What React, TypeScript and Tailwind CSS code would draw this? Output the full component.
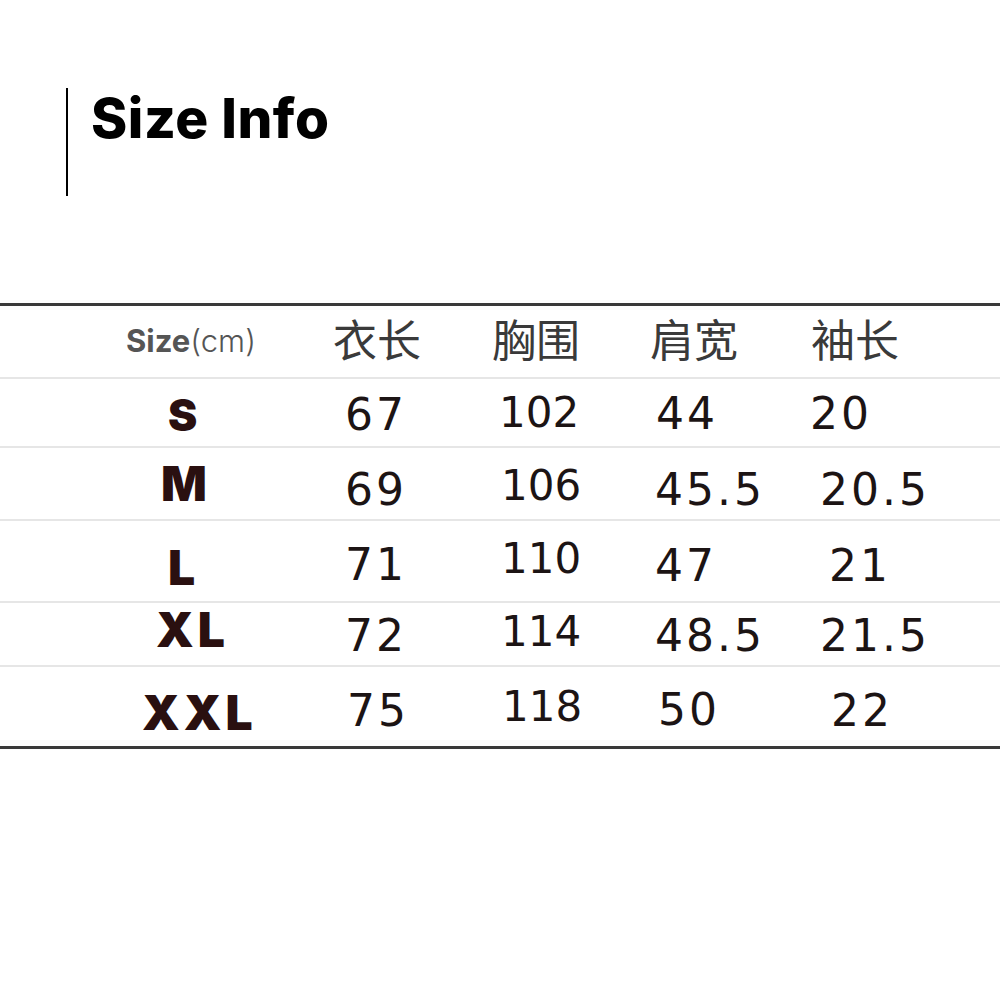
import React from "react";

type Cell = { t: string; c: string };
type Row = { h: string; border: string; size: Cell; cells: Cell[] };

const COLW = ["w-[300px]", "w-[170px]", "w-[160px]", "w-[160px]", "w-[210px]"];

const num1 = "font-['DejaVu_Sans'] text-[44px] leading-none tracking-[3px] text-[#1c1414]";
const num2 = "font-['DejaVu_Sans'] text-[42px] leading-none text-[#1c1414]";
const sizeCls = "font-['Inter'] font-black text-[48px] leading-none tracking-[4px] text-[#2a1010]";

const rows: Row[] = [
  {
    h: "h-[69px]",
    border: "border-b-2 border-[#e6e6e6]",
    size: { t: "S", c: "pl-[168px] mt-[14px] font-['Inter'] font-black text-[44px] leading-none text-[#2a1010]" },
    cells: [
      { t: "67", c: "pl-[45px] mt-[14px] " + num1 },
      { t: "102", c: "pl-[29px] mt-[13px] " + num2 },
      { t: "44", c: "pl-[26px] mt-[13px] " + num1 },
      { t: "20", c: "pl-[20px] mt-[13px] " + num1 },
    ],
  },
  {
    h: "h-[73px]",
    border: "border-b-2 border-[#e6e6e6]",
    size: { t: "M", c: "pl-[161px] mt-[12px] " + sizeCls },
    cells: [
      { t: "69", c: "pl-[45px] mt-[20px] " + num1 },
      { t: "106", c: "pl-[31px] mt-[17px] " + num2 },
      { t: "45.5", c: "pl-[25px] mt-[20px] " + num1 },
      { t: "20.5", c: "pl-[30px] mt-[20px] " + num1 },
    ],
  },
  {
    h: "h-[82px]",
    border: "border-b-2 border-[#e6e6e6]",
    size: { t: "L", c: "pl-[168px] mt-[23px] " + sizeCls },
    cells: [
      { t: "71", c: "pl-[45px] mt-[22px] " + num1 },
      { t: "110", c: "pl-[31px] mt-[17px] " + num2 },
      { t: "47", c: "pl-[25px] mt-[23px] " + num1 },
      { t: "21", c: "pl-[39px] mt-[23px] " + num1 },
    ],
  },
  {
    h: "h-[64px]",
    border: "border-b-2 border-[#e6e6e6]",
    size: { t: "XL", c: "pl-[156px] mt-[3px] " + sizeCls },
    cells: [
      { t: "72", c: "pl-[45px] mt-[11px] " + num1 },
      { t: "114", c: "pl-[31px] mt-[8px] " + num2 },
      { t: "48.5", c: "pl-[25px] mt-[11px] " + num1 },
      { t: "21.5", c: "pl-[30px] mt-[11px] " + num1 },
    ],
  },
  {
    h: "h-[79px]",
    border: "",
    size: { t: "XXL", c: "pl-[142px] mt-[22px] " + sizeCls },
    cells: [
      { t: "75", c: "pl-[47px] mt-[22px] " + num1 },
      { t: "118", c: "pl-[32px] mt-[19px] " + num2 },
      { t: "50", c: "pl-[28px] mt-[21px] " + num1 },
      { t: "22", c: "pl-[41px] mt-[22px] " + num1 },
    ],
  },
];

const cjk = "font-['Noto_Sans_CJK_SC',sans-serif] text-[44px] leading-none text-[#3a3a3a] mt-[10px]";

export default function App() {
  return (
    <div className="w-[1000px] h-[1000px] bg-white overflow-hidden">
      <div className="flex pl-[66px] pt-[88px]">
        <div className="w-[2px] h-[108px] bg-black" />
        <div className="ml-[23px] mt-[3px] font-['Inter'] font-extrabold text-[55px] leading-none text-black tracking-[0.5px]">
          Size Info
        </div>
      </div>

      <div className="mt-[107px] border-t-[3px] border-b-[3px] border-[#3a3a3a]">
        <div className="flex items-start h-[73px] border-b-2 border-[#e6e6e6]">
          <div className={COLW[0] + " pl-[126px] mt-[19px] font-['Inter'] text-[31px] leading-none text-[#555555] whitespace-nowrap"}>
            <span className="font-bold">Size</span>
            <span className="font-light">(cm)</span>
          </div>
          <div className={COLW[1] + " pl-[33px] " + cjk}>衣长</div>
          <div className={COLW[2] + " pl-[22px] " + cjk}>胸围</div>
          <div className={COLW[3] + " pl-[20px] " + cjk}>肩宽</div>
          <div className={COLW[4] + " pl-[21px] " + cjk}>袖长</div>
        </div>
        {rows.map((r, i) => (
          <div key={i} className={"flex items-start " + r.h + " " + r.border}>
            <div className={COLW[0] + " whitespace-nowrap " + r.size.c}>{r.size.t}</div>
            {r.cells.map((c, j) => (
              <div key={j} className={COLW[j + 1] + " whitespace-nowrap " + c.c}>
                {c.t}
              </div>
            ))}
          </div>
        ))}
      </div>
    </div>
  );
}
